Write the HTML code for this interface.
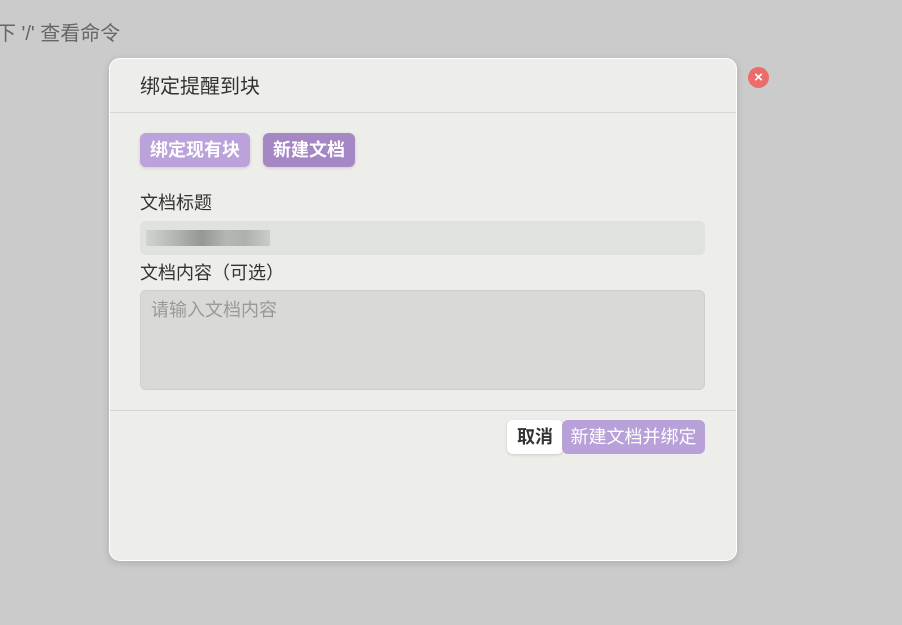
<!DOCTYPE html>
<html><head><meta charset="utf-8"><style>
body{margin:0;width:902px;height:625px;background:#cbcbcb;position:relative;overflow:hidden;font-family:"Liberation Sans","Noto Sans CJK SC",sans-serif;}
.top{position:absolute;left:-4px;top:17px;font-size:20px;color:#666;}
.dlg{position:absolute;left:109px;top:58px;width:626px;height:501px;background:#edeeea;border:1px solid #fff;border-radius:11px;box-shadow:0 2px 8px rgba(0,0,0,.15);}
.hd{height:53px;border-bottom:1px solid #d6d6d3;font-size:20px;color:#333;line-height:56px;padding-left:30px;}
.btn{position:absolute;top:74px;height:34px;border-radius:6px;color:#fff;font-weight:bold;font-size:18px;line-height:34px;padding:0 10px;box-shadow:0 1px 3px rgba(0,0,0,.15);}
.lbl{position:absolute;left:30px;font-size:18px;color:#333;}
.inp{position:absolute;left:30px;top:162px;width:565px;height:34px;background:#dfe2de;border-radius:6px;}
.ta{position:absolute;left:30px;top:231px;background:#d9dad6;border:1px solid #cfd0cc;border-radius:6px;font-size:18px;color:#999;padding:5px 0 0 10px;box-sizing:border-box;width:565px;height:100px;}
.ft{position:absolute;left:0;top:351px;width:626px;border-top:1px solid #d6d6d3;}
.x{position:absolute;left:748px;top:67px;width:21px;height:21px;border-radius:50%;background:#ec6b6b;color:#fff;font-size:15px;font-weight:bold;text-align:center;line-height:21px;}
</style></head><body>
<div class="top">下 '/' 查看命令</div>
<div class="dlg">
<div class="hd">绑定提醒到块</div>
<div class="btn" style="left:30px;background:#bca2db;">绑定现有块</div>
<div class="btn" style="left:153px;background:#a487c4;">新建文档</div>
<div class="lbl" style="top:130px;">文档标题</div>
<div class="inp"></div>
<div style="position:absolute;left:36px;top:171px;width:124px;height:16px;background:linear-gradient(90deg,#d0d2ce 0,#b4b6b2 20%,#8d8f8b 45%,#b0b2ae 65%,#a9aba7 80%,#c8cac6 100%);opacity:.9"></div>
<div class="lbl" style="top:200px;">文档内容（可选）</div>
<div class="ta">请输入文档内容</div>
<div class="ft"></div>
<div style="position:absolute;left:397px;top:361px;width:56px;height:34px;background:#fff;border-radius:6px;font-weight:bold;font-size:18px;line-height:34px;text-align:center;color:#333;box-shadow:0 1px 3px rgba(0,0,0,.15)">取消</div>
<div style="position:absolute;left:452px;top:361px;width:143px;height:34px;background:#b8a0d8;border-radius:6px;font-size:18px;line-height:34px;text-align:center;color:#fff;">新建文档并绑定</div>
</div>
<div class="x">×</div>
</body></html>
